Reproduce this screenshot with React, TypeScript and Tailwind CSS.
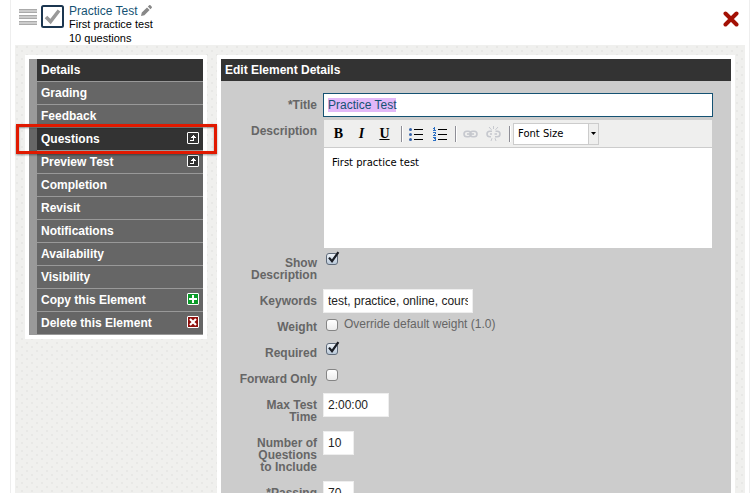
import React, { useEffect, useRef } from 'react';

type ItemIcon = 'open' | 'copy' | 'delete';

interface MenuItem {
  label: string;
  icon?: ItemIcon;
}

const menuItems: MenuItem[] = [
  { label: 'Details' },
  { label: 'Grading' },
  { label: 'Feedback' },
  { label: 'Questions', icon: 'open' },
  { label: 'Preview Test', icon: 'open' },
  { label: 'Completion' },
  { label: 'Revisit' },
  { label: 'Notifications' },
  { label: 'Availability' },
  { label: 'Visibility' },
  { label: 'Copy this Element', icon: 'copy' },
  { label: 'Delete this Element', icon: 'delete' },
];

const fieldClass = 'h-6 bg-white border border-[#eee] px-1 text-xs text-[#222] outline-none';

function MenuIcon({ type }: { type: ItemIcon }) {
  const fill = type === 'open' ? '#333' : type === 'copy' ? '#0a9a28' : '#8f0f0c';
  return (
    <svg className="w-3 h-3 mt-1 shrink-0" viewBox="0 0 12 12" fill="none">
      <rect x="0.5" y="0.5" width="11" height="11" rx="0.5" fill={fill} stroke="#fff" />
      {type === 'open' && (
        <path d="M3 8h4v1H3zM6 4h1v5H6zM5 4h3v1H5zM4 5h5v1H4zM6 3h1v1H6z" fill="#fff" />
      )}
      {type === 'copy' && <path d="M5 2h2v3h3v2H7v3H5V7H2V5h3z" fill="#fff" />}
      {type === 'delete' && <path d="M3 3l6 6M9 3l-6 6" stroke="#fff" strokeWidth="2.2" />}
    </svg>
  );
}

function Sidebar() {
  return (
    <nav className="w-[182px] shrink-0 bg-white p-1">
      <ul>
        {menuItems.map((item) => {
          const isQuestions = item.label === 'Questions';
          const dark = isQuestions || item.label === 'Details';
          return (
            <li
              key={item.label}
              className={`relative border-l-8 ${isQuestions ? 'border-[#666]' : 'border-[#999]'}`}
            >
              <a
                href="#"
                className={`flex justify-between px-1 border-b border-[#999] text-xs leading-[22px] font-bold text-white ${
                  dark ? 'bg-[#333]' : 'bg-[#666]'
                }`}
              >
                {item.label}
                {item.icon && <MenuIcon type={item.icon} />}
              </a>
              {isQuestions && (
                <div className="absolute z-10 -top-1 -bottom-[3px] -left-[21px] -right-[14px] border-[3px] border-[#e11900] shadow-[0_1px_2px_rgba(0,0,0,0.4),inset_0_1px_2px_rgba(0,0,0,0.4)] pointer-events-none" />
              )}
            </li>
          );
        })}
      </ul>
    </nav>
  );
}

interface FieldRowProps {
  label: React.ReactNode;
  htmlFor: string;
  children: React.ReactNode;
}

function FieldRow({ label, htmlFor, children }: FieldRowProps) {
  return (
    <div className="flex gap-1.5">
      <label
        htmlFor={htmlFor}
        className="w-24 shrink-0 pt-1.5 pb-2 text-right text-xs leading-3 font-bold text-[#666]"
      >
        {label}
      </label>
      <div className="flex-1 min-w-0">{children}</div>
    </div>
  );
}

function Checkbox({ id, checked = false }: { id: string; checked?: boolean }) {
  return (
    <span className="relative block w-3 h-3 mt-0.5 ml-[3px] shrink-0">
      <input
        id={id}
        type="checkbox"
        defaultChecked={checked}
        className="peer block appearance-none w-3 h-3 rounded-[3px] border border-[#858585] checked:border-[#5f6b7a] bg-linear-to-b from-white to-[#ececec] checked:from-[#eef3f8] checked:to-[#b9c8d8]"
      />
      <svg
        className="absolute left-0 -top-0.5 w-3.5 h-3.5 opacity-0 peer-checked:opacity-100 pointer-events-none"
        viewBox="0 0 14 14"
        fill="none"
      >
        <path d="M3 6.6L6 10.2L12.4 1.2" stroke="#1a1d24" strokeWidth="2.2" />
      </svg>
    </span>
  );
}

function Separator() {
  return <span className="w-0.5 h-4 bg-[#8e8e96] border-r border-white" />;
}

function Toolbar() {
  const letter = 'w-[23px] text-center font-["Liberation_Serif",serif] text-sm leading-5 font-bold text-black';
  return (
    <div className="flex items-center h-7 pl-[3px] bg-[#efefee] border-b border-[#ccc]">
      <button aria-label="Bold" className={letter}>B</button>
      <button aria-label="Italic" className={`${letter} italic`}>I</button>
      <button aria-label="Underline" className={`${letter} underline`}>U</button>
      <span className="w-[5px]" />
      <Separator />
      <button aria-label="Bulleted list" className="ml-1.5">
        <svg className="block" width="14" height="14" viewBox="0 0 14 14">
          <path d="M5 2h9v1H5zM5 7h9v1H5zM5 12h9v1H5z" fill="#000" />
          <g fill="#3563ab">
            <circle cx="1.5" cy="2.5" r="1.5" />
            <circle cx="1.5" cy="7.5" r="1.5" />
            <circle cx="1.5" cy="12.5" r="1.5" />
          </g>
        </svg>
      </button>
      <button aria-label="Numbered list" className="ml-2.5">
        <svg className="block" width="14" height="14" viewBox="0 0 14 14">
          <path d="M5 2h9v1H5zM5 7h9v1H5zM5 12h9v1H5z" fill="#000" />
          <path
            d="M1 0h1v4H1zM0 1h1v1H0zM0 3h3v1H0zM0 5h3v1H0zM2 6h1v1H2zM1 7h1v1H1zM0 8h3v1H0zM0 10h3v1H0zM1 11h2v1H1zM2 12h1v1H2zM0 13h3v1H0z"
            fill="#2a6fc4"
          />
        </svg>
      </button>
      <span className="w-2" />
      <Separator />
      <button aria-label="Insert link" className="ml-1.5">
        <svg className="block" width="15" height="16" viewBox="0 0 15 16" fill="none" stroke="#c6c8ce" strokeWidth="1.6">
          <rect x="1" y="5.2" width="7" height="5.6" rx="2.8" />
          <rect x="7" y="5.2" width="7" height="5.6" rx="2.8" />
          <path d="M4 8h7" />
        </svg>
      </button>
      <button aria-label="Remove link" className="ml-2">
        <svg className="block" width="15" height="16" viewBox="0 0 15 16" fill="none" stroke="#c6c8ce" strokeWidth="1.6">
          <path d="M6 5.2H3.8a2.8 2.8 0 0 0 0 5.6H5M4 8h2M9.5 5.2h1.7a2.8 2.8 0 0 1 0 5.6H9M8.500 8h2.500" />
          <path d="M7.5 0v3M3 1l2.500 2.800M12 1L9.500 3.800M6 12.200L5 15M9 12.200l1 2.800" strokeWidth="1" />
        </svg>
      </button>
      <span className="w-2" />
      <Separator />
      <div className="relative ml-0.5">
        <select
          aria-label="Font Size"
          className='block appearance-none w-[86px] h-[22px] pl-1 pr-3 bg-white border border-[#ccc] font-["DejaVu_Sans",sans-serif] text-[10px] text-black'
        >
          <option>Font Size</option>
        </select>
        <span className="absolute right-0 top-0 flex items-center justify-center w-[11px] h-[22px] bg-[#efefee] border border-[#ccc] pointer-events-none">
          <svg width="5" height="3" viewBox="0 0 5 3" className="shrink-0">
            <path d="M0 0h5L2.5 3z" fill="#000" />
          </svg>
        </span>
      </div>
    </div>
  );
}

function DetailsForm() {
  const titleRef = useRef<HTMLInputElement>(null);

  useEffect(() => {
    titleRef.current?.focus();
    titleRef.current?.select();
  }, []);

  return (
    <main className="flex-1 min-w-0 bg-white p-1">
      <h2 className="pl-1 bg-[#333] text-xs leading-[22px] font-bold text-white">Edit Element Details</h2>
      <form className="bg-[#ccc] pt-3 pr-[18px] pb-8">
        <FieldRow label="*Title" htmlFor="title">
          <input
            id="title"
            ref={titleRef}
            defaultValue="Practice Test"
            className="block w-full h-6 px-1 bg-white border border-[#155273] text-xs text-[#155273] outline-none selection:bg-[#e2b8f8] selection:text-[#155273]"
          />
        </FieldRow>
        <FieldRow label="Description" htmlFor="description">
          <div className="mx-px mt-px mb-[3px]">
            <Toolbar />
            <textarea
              id="description"
              defaultValue="First practice test"
              className='block w-full h-[100px] p-2 bg-white resize-none outline-none font-["DejaVu_Sans",sans-serif] text-[10px] leading-[14px] text-black'
            />
          </div>
        </FieldRow>
        <FieldRow label={<>Show<br />Description</>} htmlFor="show-description">
          <Checkbox id="show-description" checked />
        </FieldRow>
        <FieldRow label="Keywords" htmlFor="keywords">
          <input id="keywords" defaultValue="test, practice, online, course" className={`${fieldClass} block w-[150px]`} />
        </FieldRow>
        <FieldRow label="Weight" htmlFor="weight">
          <div className="flex items-center h-[18px] gap-1.5">
            <Checkbox id="weight" />
            <label htmlFor="weight" className="text-xs text-[#666]">Override default weight (1.0)</label>
          </div>
        </FieldRow>
        <FieldRow label="Required" htmlFor="required">
          <Checkbox id="required" checked />
        </FieldRow>
        <FieldRow label="Forward Only" htmlFor="forward-only">
          <Checkbox id="forward-only" />
        </FieldRow>
        <FieldRow label={<>Max Test<br />Time</>} htmlFor="max-time">
          <input id="max-time" defaultValue="2:00:00" className={`${fieldClass} block w-[66px]`} />
        </FieldRow>
        <FieldRow label={<>Number of<br />Questions<br />to Include</>} htmlFor="question-count">
          <input id="question-count" defaultValue="10" className={`${fieldClass} block w-[31px]`} />
        </FieldRow>
        <FieldRow label="*Passing" htmlFor="passing">
          <input id="passing" defaultValue="70" className={`${fieldClass} block w-[31px]`} />
        </FieldRow>
      </form>
    </main>
  );
}

function Header() {
  return (
    <header className="flex items-start h-[45px] pl-1 pr-1.5">
      <svg className="mt-[9px]" width="18" height="16" viewBox="0 0 18 16" shapeRendering="crispEdges">
        <path d="M0 0h18v4H0zM0 6h18v4H0zM0 12h18v4H0z" fill="#ccc" />
        <path d="M0 0h18v1H0zM0 6h18v1H0zM0 12h18v1H0zM0 3h18v1H0zM0 9h18v1H0zM0 15h18v1H0z" fill="#aaa" />
      </svg>
      <svg className="mt-[5px] ml-1" width="23" height="23" viewBox="0 0 23 23" fill="none">
        <rect x="1" y="1" width="21" height="21" rx="1.5" fill="#fff" stroke="#1b3650" strokeWidth="2" />
        <path d="M5 12l4.500 4.500L18 5.500" stroke="#999" strokeWidth="3.6" />
      </svg>
      <div className="ml-[5px] pt-1 text-[11px] leading-[14px] text-black">
        <div className="flex items-center gap-1 h-[13px] text-xs text-[#155273]">
          <h1>Practice Test</h1>
          <button aria-label="Edit title">
            <svg className="block" width="11" height="11" viewBox="0 0 11 11" fill="#888">
              <path d="M0 11l.8-3.4L6 2.4 8.600 5 3.400 10.200zM6.800 1.600L8 .4c.5-.5 1.100-.5 1.600 0l1 1c.5.5.5 1.100 0 1.600L9.400 4.200z" />
            </svg>
          </button>
        </div>
        <p>First practice test</p>
        <p>10 questions</p>
      </div>
      <button aria-label="Close" className="ml-auto mt-[11px]">
        <svg className="block" width="16" height="16" viewBox="0 0 16 16" fill="none">
          <path d="M2.5 2.5l11 11M13.5 2.5l-11 11" stroke="#a31004" strokeWidth="4" strokeLinecap="round" />
        </svg>
      </button>
    </header>
  );
}

export default function App() {
  return (
    <div className='h-screen overflow-hidden bg-white pl-2.5 pr-[5px] font-["Liberation_Sans",Arial,sans-serif]'>
      <div className="border-x border-[#eee] px-1">
        <Header />
        <div className="flex items-start gap-2.5 p-2.5 bg-[#f0f0ee] bg-[radial-gradient(circle_at_2px_2px,#e8e8e6_1px,transparent_1px),radial-gradient(circle_at_7px_6px,#e8e8e6_1px,transparent_1px)] bg-[size:10px_8px]">
          <Sidebar />
          <DetailsForm />
        </div>
      </div>
    </div>
  );
}
